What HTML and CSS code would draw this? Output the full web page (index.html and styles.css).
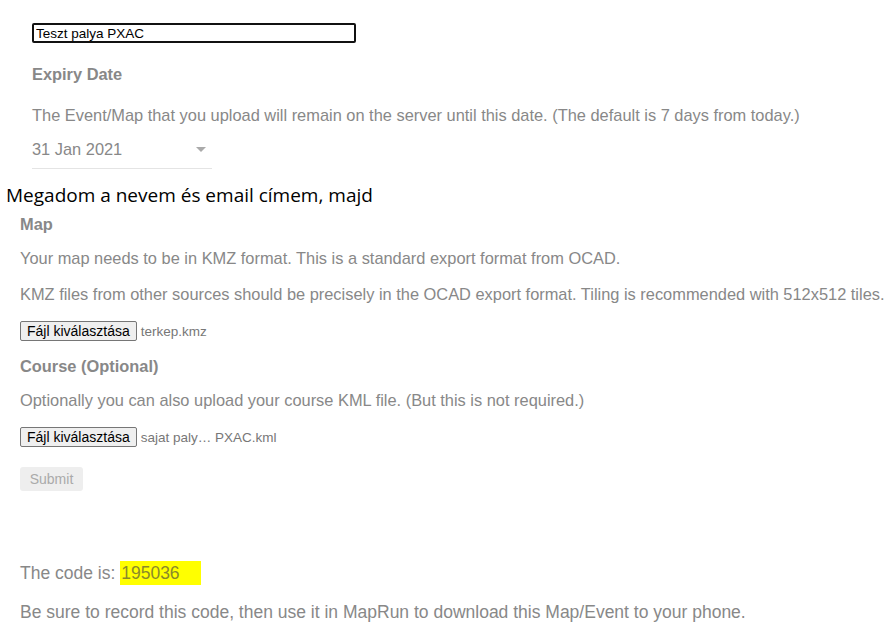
FILE: index.html
```html
<!DOCTYPE html>
<html lang="hu">
<head>
  <meta charset="UTF-8">
  <title>MapRun feltöltés</title>
  <link rel="stylesheet" href="styles.css">
</head>
<body>
  <div class="panel first">
    <input class="name" type="text" value="Teszt palya PXAC">
    <h3>Expiry Date</h3>
    <p>The Event/Map that you upload will remain on the server until this date. (The default is 7 days from today.)</p>
    <div class="date">
      <span>31 Jan 2021</span>
      <span class="arrow"></span>
    </div>
  </div>

  <div class="note">Megadom a nevem és email címem, majd</div>

  <div class="panel second">
    <h3>Map</h3>
    <p>Your map needs to be in KMZ format. This is a standard export format from OCAD.</p>
    <p class="tight">KMZ files from other sources should be precisely in the OCAD export format. Tiling is recommended with 512x512 tiles.</p>
    <div class="file"><button>Fájl kiválasztása</button><span>terkep.kmz</span></div>
    <h3>Course (Optional)</h3>
    <p>Optionally you can also upload your course KML file. (But this is not required.)</p>
    <div class="file"><button>Fájl kiválasztása</button><span>sajat paly… PXAC.kml</span></div>
    <button class="submit" disabled>Submit</button>
  </div>

  <div class="panel result">
    <p>The code is: <mark>195036</mark></p>
    <p>Be sure to record this code, then use it in MapRun to download this Map/Event to your phone.</p>
  </div>
</body>
</html>
```

FILE: styles.css
```css
body { margin: 0; background: #fff; font-family: "Liberation Sans", Arial, sans-serif; color: #888; }
.panel { font-size: 16.4px; line-height: 19px; }
.panel h3 { font-size: 16.4px; font-weight: bold; color: #888; margin: 0; }
.panel p { margin: 0; }

.first { padding: 23px 0 0 32px; }
.name { display: block; width: 324px; height: 20px; box-sizing: border-box; border: 2px solid #111; border-radius: 2px; padding: 0 2px; font: 13.5px "Liberation Sans", Arial, sans-serif; color: #000; outline: none; }
.first h3 { margin-top: 22px; }
.first p { margin-top: 22px; }
.date { display: flex; align-items: center; justify-content: space-between; width: 180px; margin-top: 15px; padding-bottom: 9px; border-bottom: 1px solid #e4e4e4; }
.arrow { width: 0; height: 0; border-left: 5px solid transparent; border-right: 5px solid transparent; border-top: 5px solid #aaa; margin-right: 6px; }

.note { font-family: "Open Sans", "Noto Sans", sans-serif; font-size: 19px; line-height: 24px; color: #000; margin: 14px 0 0 6px; }

.second { padding-left: 20px; }
.second h3 { margin-top: 8px; }
.second h3 + p { margin-top: 15px; }
.second p.tight { margin-top: 17px; }
.file { display: flex; align-items: center; gap: 4px; margin-top: 12px; font-size: 13.5px; color: #777; }
.file button { font: 14px "Liberation Sans", Arial, sans-serif; color: #000; background: #efefef; border: 1px solid #767676; border-radius: 2px; padding: 0 6px; height: 20px; }
.second p + .file { margin-top: 17px; }
.second .file + h3 { margin-top: 16px; }
.submit { display: block; margin-top: 20px; font: 14px "Liberation Sans", Arial, sans-serif; color: #aaa; background: #eee; border: none; border-radius: 3px; width: 63px; height: 24px; }

.result { font-size: 17.5px; line-height: 20px; padding: 72px 0 0 20px; }
.result p + p { margin-top: 19px; }
mark { background: #ffff00; color: #8a8a2a; padding: 2px 21px 2px 1px; }
```
